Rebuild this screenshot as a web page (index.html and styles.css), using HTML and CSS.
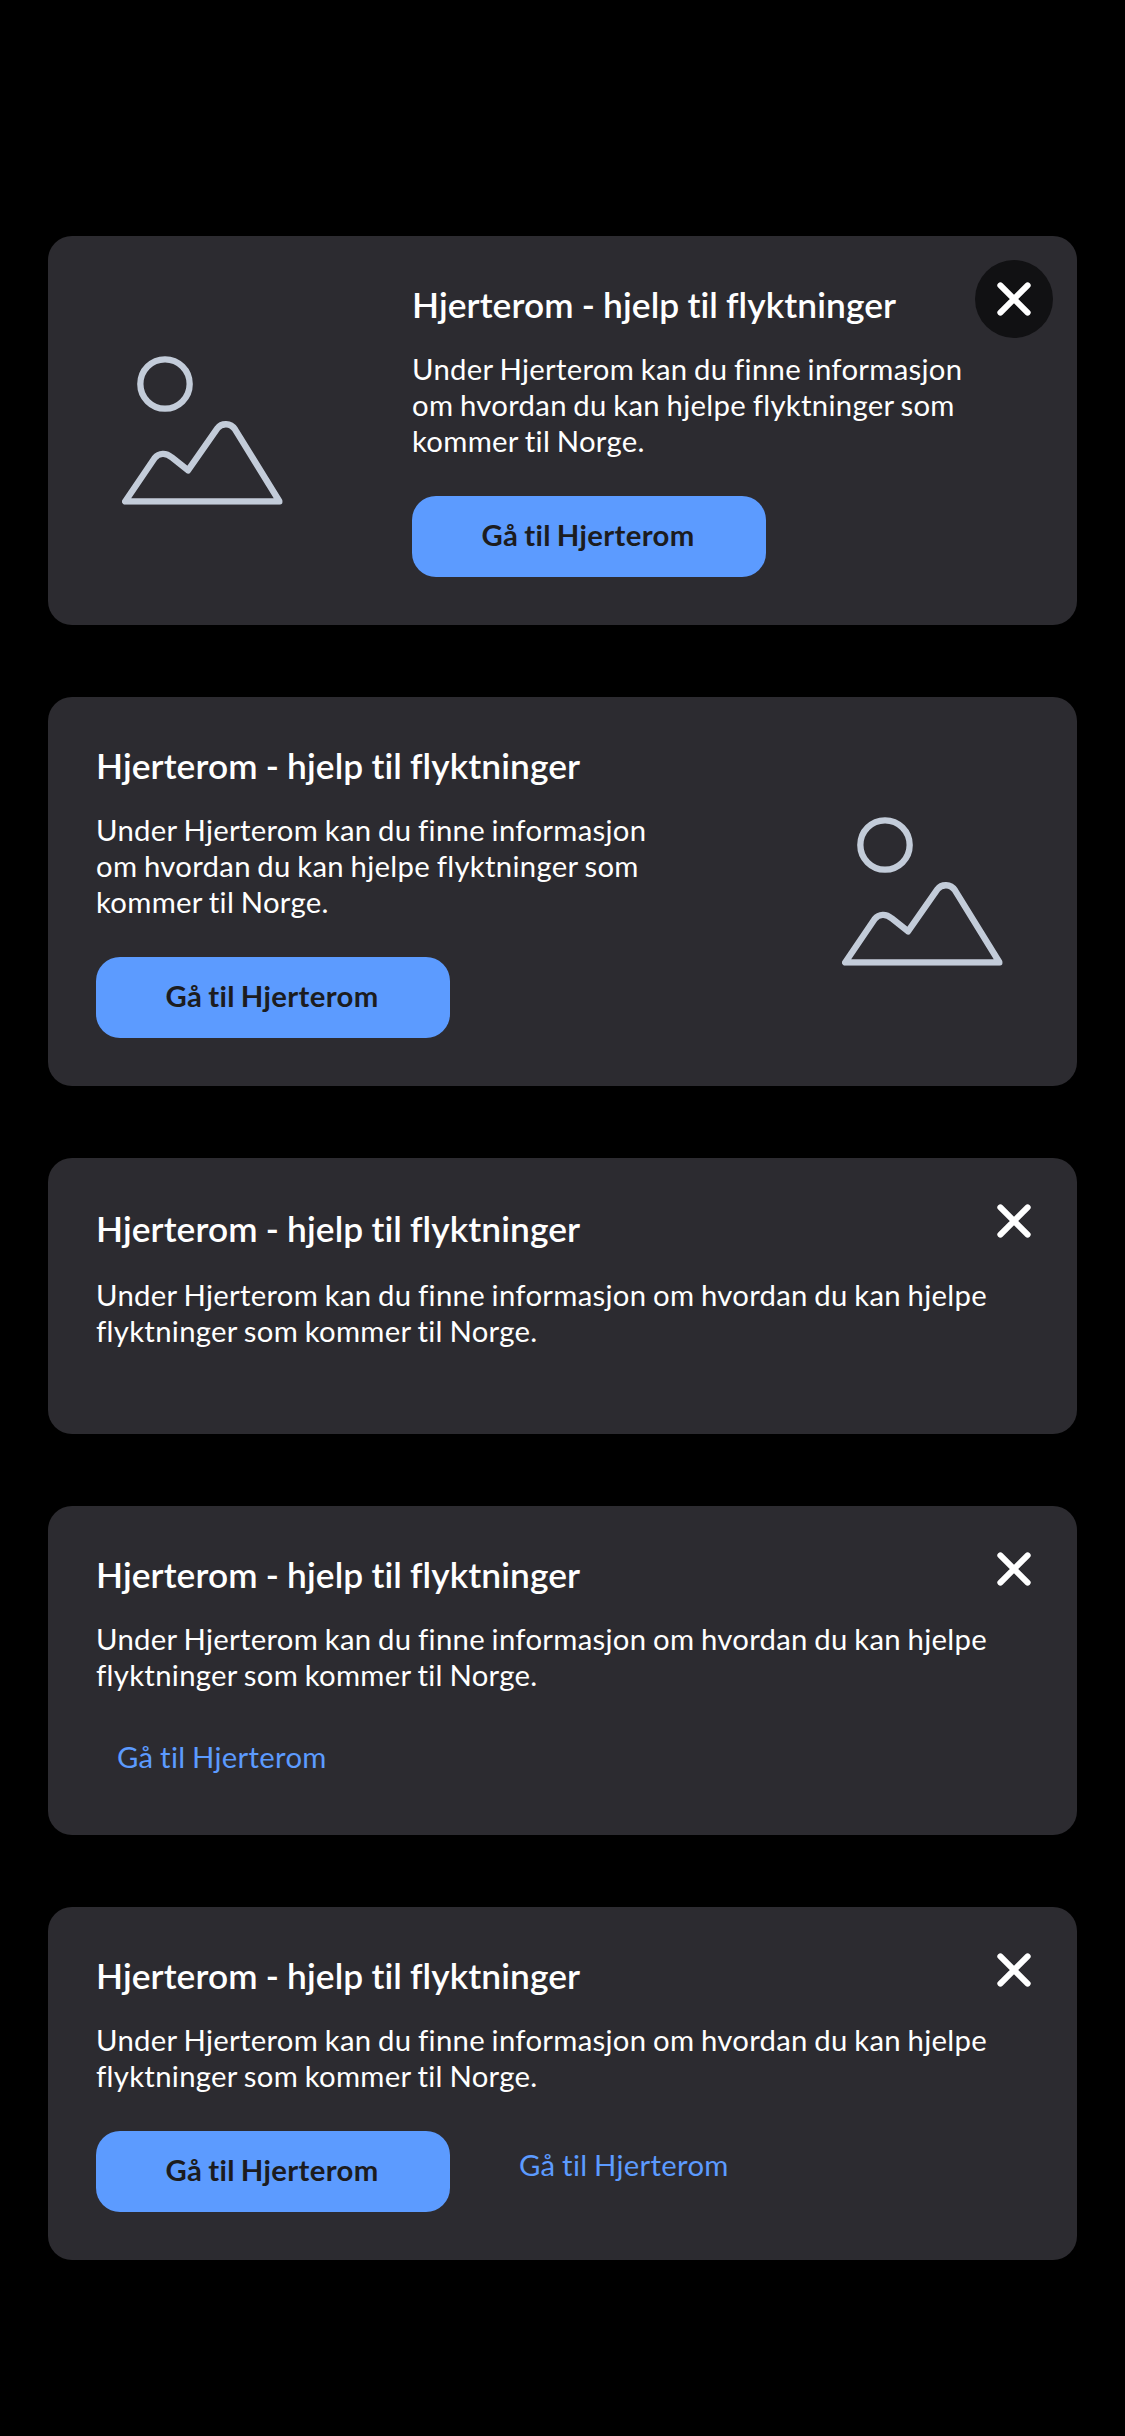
FILE: index.html
```
<!DOCTYPE html>
<html lang="no">
<head>
<meta charset="utf-8">
<title>Hjerterom</title>
<link rel="stylesheet" href="styles.css">
</head>
<body>
<svg class="defs" aria-hidden="true">
  <symbol id="picture" viewBox="37 48 482 446">
    <g fill="none" stroke="currentColor" stroke-width="19" stroke-linejoin="round">
      <circle cx="166" cy="132" r="74"/>
      <path d="M46.500 484.500H509.500L376 268C363 248 336 248 323 265L235 391L186 352C169 337 148 338 135 354Z"/>
    </g>
  </symbol>
  <symbol id="cross" viewBox="0 0 34 34">
    <path d="M3.400 3.400L30.600 30.600M30.600 3.400L3.400 30.600" fill="none" stroke="currentColor" stroke-width="6.100" stroke-linecap="round"/>
  </symbol>
</svg>
<main class="page">
  <section class="card">
    <div class="media"><svg class="picture"><use href="#picture"/></svg></div>
    <div class="content content-after">
      <h2 class="title">Hjerterom - hjelp til flyktninger</h2>
      <p class="text">Under Hjerterom kan du finne informasjon om hvordan du kan hjelpe flyktninger som kommer til Norge.</p>
      <div class="actions"><button class="button">Gå til Hjerterom</button></div>
    </div>
    <button class="close close-filled" aria-label="Lukk"><svg class="cross"><use href="#cross"/></svg></button>
  </section>

  <section class="card">
    <div class="content content-before">
      <h2 class="title">Hjerterom - hjelp til flyktninger</h2>
      <p class="text">Under Hjerterom kan du finne informasjon om hvordan du kan hjelpe flyktninger som kommer til Norge.</p>
      <div class="actions"><button class="button">Gå til Hjerterom</button></div>
    </div>
    <div class="media"><svg class="picture"><use href="#picture"/></svg></div>
  </section>

  <section class="card card-plain">
    <div class="content">
      <h2 class="title">Hjerterom - hjelp til flyktninger</h2>
      <p class="text">Under Hjerterom kan du finne informasjon om hvordan du kan hjelpe flyktninger som kommer til Norge.</p>
    </div>
    <button class="close" aria-label="Lukk"><svg class="cross"><use href="#cross"/></svg></button>
  </section>

  <section class="card">
    <div class="content">
      <h2 class="title">Hjerterom - hjelp til flyktninger</h2>
      <p class="text">Under Hjerterom kan du finne informasjon om hvordan du kan hjelpe flyktninger som kommer til Norge.</p>
      <div class="actions"><a class="link">Gå til Hjerterom</a></div>
    </div>
    <button class="close" aria-label="Lukk"><svg class="cross"><use href="#cross"/></svg></button>
  </section>

  <section class="card">
    <div class="content">
      <h2 class="title">Hjerterom - hjelp til flyktninger</h2>
      <p class="text">Under Hjerterom kan du finne informasjon om hvordan du kan hjelpe flyktninger som kommer til Norge.</p>
      <div class="actions"><button class="button">Gå til Hjerterom</button><a class="link link-second">Gå til Hjerterom</a></div>
    </div>
    <button class="close" aria-label="Lukk"><svg class="cross"><use href="#cross"/></svg></button>
  </section>
</main>
</body>
</html>
```
FILE: styles.css
```
* { box-sizing: border-box; }

body {
  margin: 0;
  background: #000;
  color: #fff;
  font: 400 29.3px/36px Lato, "Liberation Sans", sans-serif;
  font-variant-ligatures: none;
  letter-spacing: 0.3px;
  word-spacing: -1.2px;
}

.defs {
  position: absolute;
  width: 0;
  height: 0;
}

.page {
  display: flex;
  flex-direction: column;
  gap: 72px;
  min-height: 2436px;
  padding: 236px 48px 176px;
}

.card {
  position: relative;
  display: flex;
  border-radius: 24px;
  background: #2c2b30;
}

.card-plain { height: 276px; }

.media {
  display: flex;
  flex: 0 0 309px;
  align-items: center;
  justify-content: center;
}

.picture {
  width: 160.7px;
  height: 148.7px;
  color: #c3ccd9;
}

.content {
  flex: 1;
  padding: 48px;
}

.content-after { padding: 48px 95px 48px 55px; }
.content-before { padding-right: 102px; }

.title {
  margin: 0 0 26px;
  font-size: 35.3px;
  font-weight: 600;
  line-height: 41px;
  letter-spacing: 0.1px;
  word-spacing: -0.8px;
}

.text { margin: 0; }

.card-plain .content { padding-top: 50px; }
.card-plain .title { margin-bottom: 28px; }

.actions {
  display: flex;
  gap: 48px;
  align-items: flex-start;
  margin-top: 37px;
}

.button {
  width: 354px;
  height: 81px;
  padding: 0 2px 4px 0;
  border: 0;
  border-radius: 24px;
  background: #5c9bff;
  color: #1c1c20;
  font: inherit;
  font-weight: 700;
  letter-spacing: 0.35px;
  word-spacing: -1.5px;
}

.link {
  height: 57px;
  padding: 9px 21px;
  color: #5c9bff;
}

.link-second { margin-top: 7px; }

.close {
  position: absolute;
  top: 24px;
  right: 24px;
  display: flex;
  align-items: center;
  justify-content: center;
  width: 78px;
  height: 78px;
  padding: 0;
  border: 0;
  border-radius: 50%;
  background: none;
  color: #fff;
}

.close-filled { background: #111113; }

.cross {
  width: 34px;
  height: 34px;
}
```
